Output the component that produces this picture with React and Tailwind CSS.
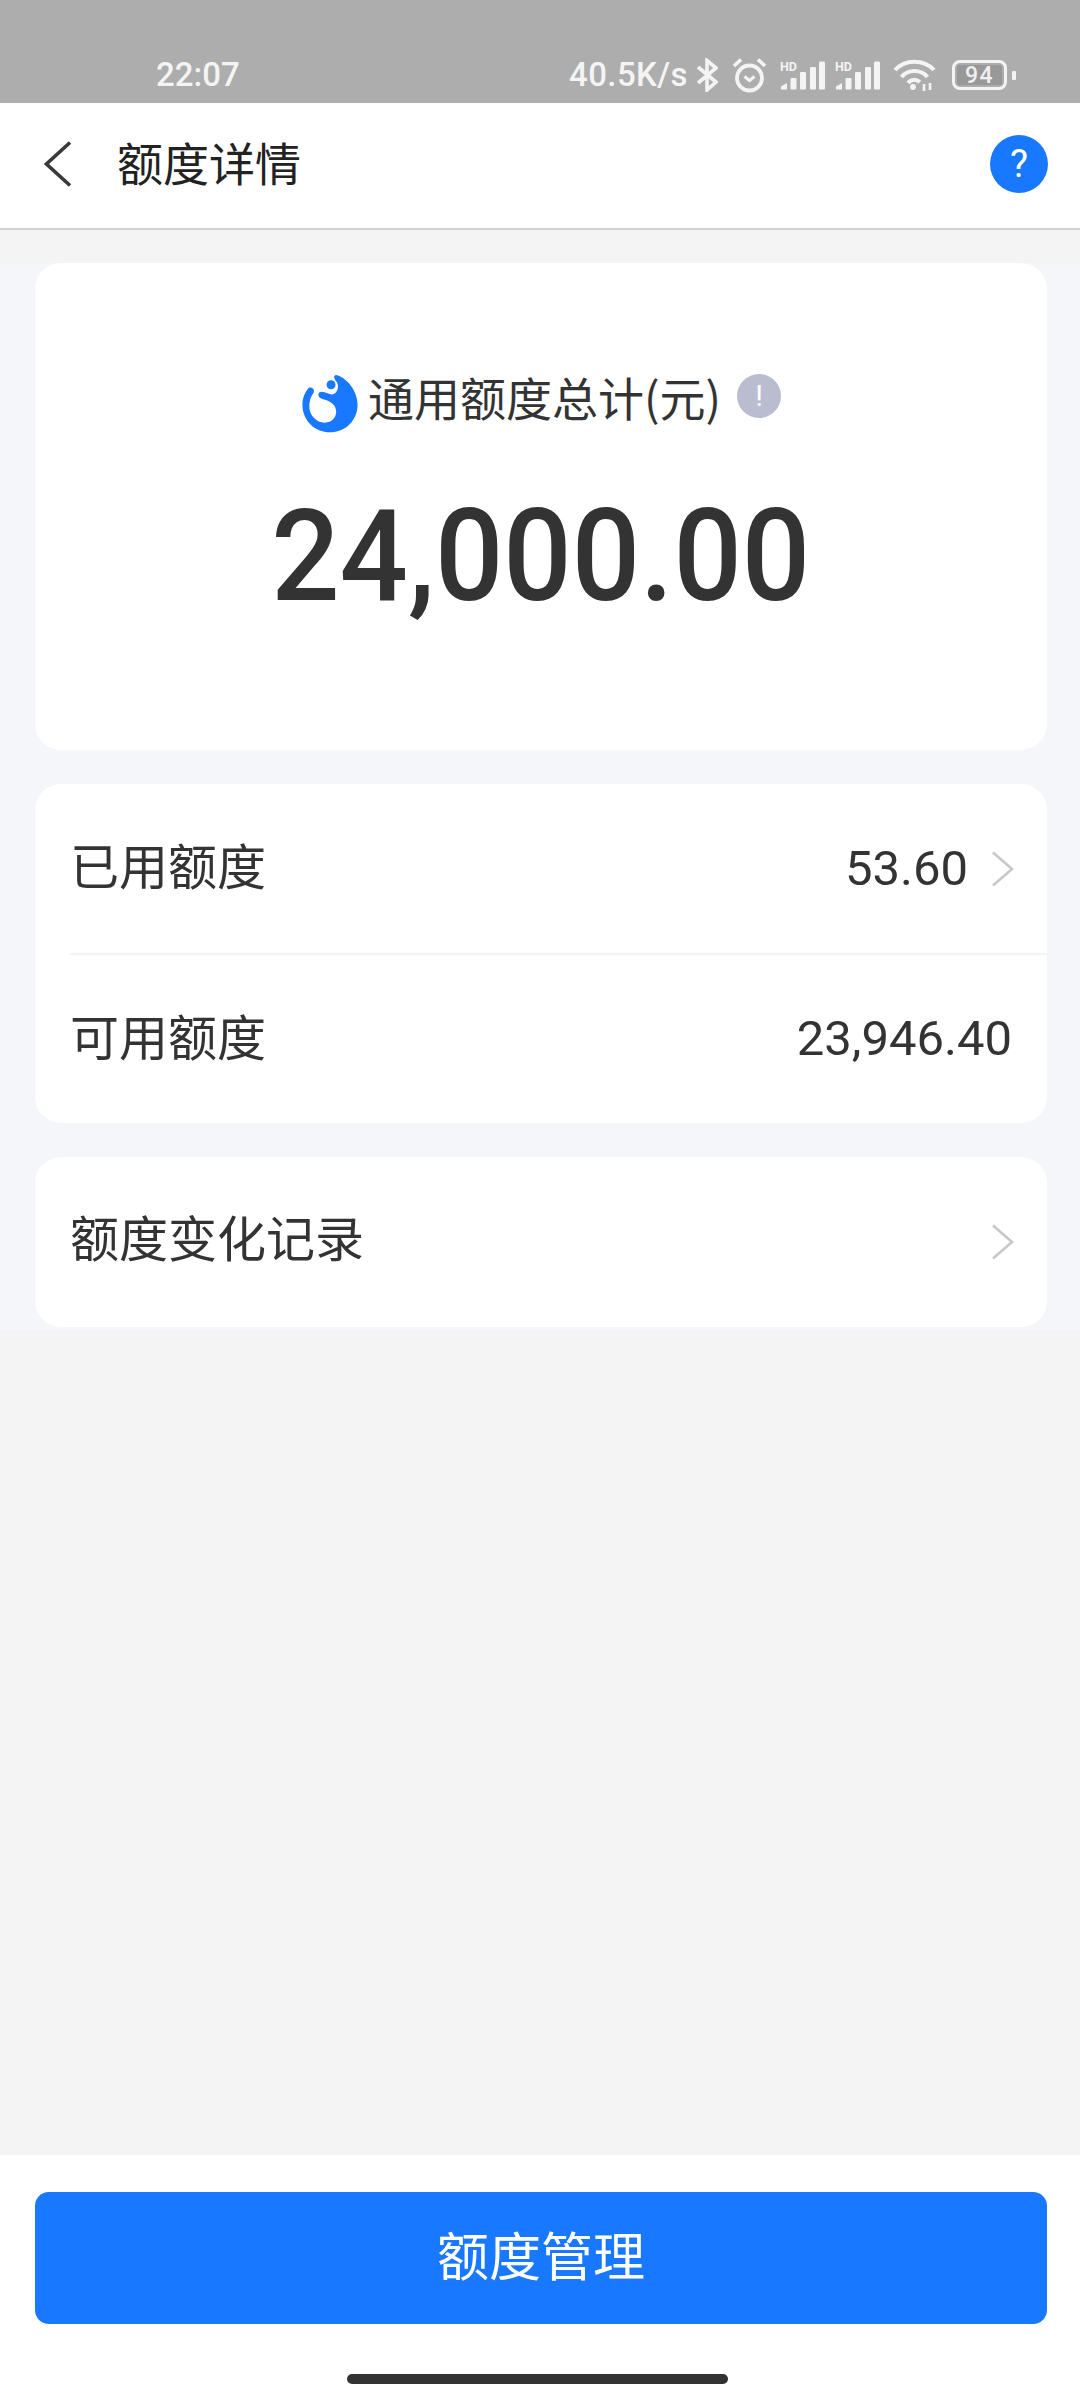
const cjk = { fontFamily: '"Noto Sans CJK SC", sans-serif' };
const roboto = { fontFamily: 'Roboto, sans-serif' };

function Chevron({ className }) {
  return (
    <svg className={className} width="22" height="36" viewBox="0 0 22 36" fill="none" stroke="#c8c8c8" strokeWidth="2.6">
      <path d="M1 1.5 L20 18 L1 34.5" />
    </svg>
  );
}

function Bars() {
  return (
    <svg width="46" height="33" viewBox="0 -4 46 33" fill="#f4f4f4" className="-mt-[4px]">
      <text x="0" y="9.5" fontSize="12.5" fontWeight="700" fontFamily="Roboto, sans-serif">HD</text>
      <path d="M1 28.5 V25.5 L7 22 V28.5 Z" />
      <rect x="10.5" y="17" width="6" height="11.5" rx="1.2" />
      <rect x="20" y="11" width="6" height="17.5" rx="1.2" />
      <rect x="30" y="6" width="6" height="22.5" rx="1.2" />
      <rect x="39" y="0.5" width="6" height="28" rx="1.2" />
    </svg>
  );
}

function StatusIcons() {
  return (
    <div className="flex items-center">
      <svg className="ml-[8px]" width="22" height="34" viewBox="0 0 22 34" fill="none" stroke="#f4f4f4" strokeWidth="3.6">
        <path d="M2 9 L20 24 L11 32 V2.5 L20 10 L2 25" />
      </svg>
      <svg className="ml-[14px]" width="35" height="36" viewBox="0 0 35 36" fill="none" stroke="#f4f4f4">
        <circle cx="17.5" cy="21" r="12.5" strokeWidth="3.8" />
        <path d="M12.5 19.5 L17.5 23.5 L22.5 19.5" strokeWidth="3" />
        <path d="M2 9 L9 2.5 M33 9 L26 2.5" strokeWidth="3.6" />
      </svg>
      <div className="ml-[13px]"><Bars /></div>
      <div className="ml-[9px]"><Bars /></div>
      <svg className="ml-[12px]" width="43" height="32" viewBox="0 0 43 32" fill="none" stroke="#f4f4f4" strokeWidth="4">
        <path d="M2 11 C12 0 31 0 41 11" />
        <path d="M8.5 18 C15 10 28 10 34.5 18" />
        <path d="M15 24 C18 20 23 20 27 23" />
        <circle cx="20" cy="28" r="2.2" fill="#f4f4f4" strokeWidth="1.5" />
        <path d="M31 25 V32 M37 24 V31" strokeWidth="2.6" />
      </svg>
      <div className="ml-[16px] flex h-[30px] w-[55px] items-center rounded-[8px] border-[3px] border-[#f4f4f4] p-[2px]">
        <div className="flex h-full w-full items-center justify-center rounded-[2px] bg-[#989898] text-[23px] leading-none tracking-[1.5px] text-[#f0f0f0]" style={roboto}>94</div>
      </div>
      <div className="ml-[5px] h-[9px] w-[4px] rounded-[1px] bg-[#f4f4f4]" />
    </div>
  );
}

export default function App() {
  return (
    <div className="flex h-[2400px] w-[1080px] flex-col overflow-hidden bg-[#f4f4f4]" style={cjk}>
      <div className="flex h-[103px] items-end justify-between bg-[#adadad] pb-[6px] pl-[156px] pr-[64px] text-[33px] font-medium leading-[44px] text-[#f4f4f4]" style={roboto}>
        <span>22:07</span>
        <div className="flex items-center">
          <span className="tracking-[0.4px]">40.5K/s</span>
          <StatusIcons />
        </div>
      </div>

      <div className="flex h-[127px] items-center border-b-[2px] border-[#d0d0d0] bg-white pl-[44px] pr-[32px]">
        <svg className="mb-[3px]" width="28" height="46" viewBox="0 0 28 46" fill="none" stroke="#3a3a3a" strokeWidth="3.6">
          <path d="M26 1.5 L2.5 23 L26 44.5" />
        </svg>
        <span className="mb-[10px] ml-[45px] text-[46px] leading-none text-[#222222]">额度详情</span>
        <div className="mb-[3px] ml-auto flex h-[58px] w-[58px] items-center justify-center rounded-full bg-[#1878ff] text-[38px] leading-none text-white" style={roboto}>?</div>
      </div>

      <div className="mt-[33px] flex flex-col gap-[34px] bg-[#f4f6fa] pb-[3px] pl-[35px] pr-[33px]">
        <div className="flex h-[487px] flex-col items-center rounded-[26px] bg-white pt-[104px]">
          <div className="flex h-[58px] items-center">
            <svg className="translate-y-[7px]" width="58" height="60" viewBox="28 28 164 174">
              <path
                fill="#1878ff"
                d="M128 34 C165 45 190 85 190 120 C190 165 155 200 110 200 C65 200 30 165 30 120 C30 100 37 85 47 72 C55 66 68 74 62 86 C52 100 50 112 50 125 C50 150 70 172 95 172 C115 172 128 158 128 140 C128 122 112 108 90 104 C78 102 72 90 80 84 C90 78 105 90 115 90 C130 90 138 70 130 55 C122 45 118 36 128 34 Z"
              />
              <circle cx="113" cy="62" r="13" fill="#1878ff" />
            </svg>
            <span className="ml-[9px] text-[46px] leading-none text-[#333333]">通用额度总计(元)</span>
            <div className="ml-[16px] flex h-[44px] w-[44px] items-center justify-center rounded-full bg-[#babdd0] text-[30px] leading-none text-white" style={roboto}>!</div>
          </div>
          <div className="mt-[56px] origin-center scale-x-[0.94] text-[128px] font-medium leading-[150px] text-[#333333]" style={roboto}>24,000.00</div>
        </div>

        <div className="flex h-[339px] flex-col rounded-[26px] bg-white">
          <div className="ml-[35px] flex h-[171px] items-center border-b-[2px] border-[#f4f4f4] pr-[33px]">
            <span className="mb-[10px] text-[49px] leading-none text-[#333333]">已用额度</span>
            <span className="ml-auto text-[49px] leading-none text-[#333333]" style={roboto}>53.60</span>
            <Chevron className="ml-[24px]" />
          </div>
          <div className="flex flex-1 items-center px-[35px]">
            <span className="mb-[10px] text-[49px] leading-none text-[#333333]">可用额度</span>
            <span className="mb-[2px] ml-auto text-[49px] leading-none text-[#333333]" style={roboto}>23,946.40</span>
          </div>
        </div>

        <div className="flex h-[170px] items-center rounded-[26px] bg-white pl-[35px] pr-[33px]">
          <span className="mb-[13px] text-[49px] leading-none text-[#333333]">额度变化记录</span>
          <Chevron className="ml-auto" />
        </div>
      </div>

      <div className="mt-auto flex h-[245px] flex-col items-center bg-white pl-[35px] pr-[33px] pt-[37px]">
        <button className="flex h-[132px] w-full items-center justify-center rounded-[14px] bg-[#1878ff] pb-[8px] text-[52px] leading-none text-white">额度管理</button>
        <div className="ml-[-8px] mt-[50px] h-[10px] w-[381px] rounded-full bg-[#333333]" />
      </div>
    </div>
  );
}
